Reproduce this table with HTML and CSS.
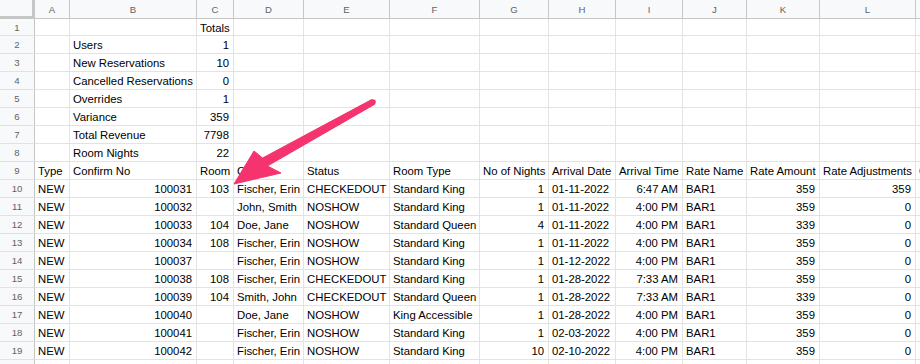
FILE: index.html
```html
<!DOCTYPE html>
<html>
<head>
<meta charset="utf-8">
<link rel="stylesheet" href="styles.css">
</head>
<body>
<div class="sheet">
  <div class="grid" id="grid">
    <div class="corner"></div>
    <div class="ch">A</div><div class="ch">B</div><div class="ch">C</div><div class="ch">D</div><div class="ch">E</div><div class="ch">F</div><div class="ch">G</div><div class="ch">H</div><div class="ch">I</div><div class="ch">J</div><div class="ch">K</div><div class="ch">L</div><div class="ch"></div>

    <div class="rh">1</div><div class="c"></div><div class="c"></div><div class="c">Totals</div><div class="c"></div><div class="c"></div><div class="c"></div><div class="c"></div><div class="c"></div><div class="c"></div><div class="c"></div><div class="c"></div><div class="c"></div><div class="c"></div>
    <div class="rh">2</div><div class="c"></div><div class="c">Users</div><div class="c n">1</div><div class="c"></div><div class="c"></div><div class="c"></div><div class="c"></div><div class="c"></div><div class="c"></div><div class="c"></div><div class="c"></div><div class="c"></div><div class="c"></div>
    <div class="rh">3</div><div class="c"></div><div class="c">New Reservations</div><div class="c n">10</div><div class="c"></div><div class="c"></div><div class="c"></div><div class="c"></div><div class="c"></div><div class="c"></div><div class="c"></div><div class="c"></div><div class="c"></div><div class="c"></div>
    <div class="rh">4</div><div class="c"></div><div class="c">Cancelled Reservations</div><div class="c n">0</div><div class="c"></div><div class="c"></div><div class="c"></div><div class="c"></div><div class="c"></div><div class="c"></div><div class="c"></div><div class="c"></div><div class="c"></div><div class="c"></div>
    <div class="rh">5</div><div class="c"></div><div class="c">Overrides</div><div class="c n">1</div><div class="c"></div><div class="c"></div><div class="c"></div><div class="c"></div><div class="c"></div><div class="c"></div><div class="c"></div><div class="c"></div><div class="c"></div><div class="c"></div>
    <div class="rh">6</div><div class="c"></div><div class="c">Variance</div><div class="c n">359</div><div class="c"></div><div class="c"></div><div class="c"></div><div class="c"></div><div class="c"></div><div class="c"></div><div class="c"></div><div class="c"></div><div class="c"></div><div class="c"></div>
    <div class="rh">7</div><div class="c"></div><div class="c">Total Revenue</div><div class="c n">7798</div><div class="c"></div><div class="c"></div><div class="c"></div><div class="c"></div><div class="c"></div><div class="c"></div><div class="c"></div><div class="c"></div><div class="c"></div><div class="c"></div>
    <div class="rh">8</div><div class="c"></div><div class="c">Room Nights</div><div class="c n">22</div><div class="c"></div><div class="c"></div><div class="c"></div><div class="c"></div><div class="c"></div><div class="c"></div><div class="c"></div><div class="c"></div><div class="c"></div><div class="c"></div>
    <div class="rh">9</div><div class="c">Type</div><div class="c">Confirm No</div><div class="c">Room</div><div class="c">Guest</div><div class="c">Status</div><div class="c">Room Type</div><div class="c">No of Nights</div><div class="c">Arrival Date</div><div class="c">Arrival Time</div><div class="c">Rate Name</div><div class="c">Rate Amount</div><div class="c">Rate Adjustments</div><div class="c">Comments</div>

    <div class="rh">10</div><div class="c">NEW</div><div class="c n">100031</div><div class="c n">103</div><div class="c">Fischer, Erin</div><div class="c">CHECKEDOUT</div><div class="c">Standard King</div><div class="c n">1</div><div class="c">01-11-2022</div><div class="c n">6:47 AM</div><div class="c">BAR1</div><div class="c n">359</div><div class="c n">359</div><div class="c"></div>
    <div class="rh">11</div><div class="c">NEW</div><div class="c n">100032</div><div class="c n"></div><div class="c">John, Smith</div><div class="c">NOSHOW</div><div class="c">Standard King</div><div class="c n">1</div><div class="c">01-11-2022</div><div class="c n">4:00 PM</div><div class="c">BAR1</div><div class="c n">359</div><div class="c n">0</div><div class="c"></div>
    <div class="rh">12</div><div class="c">NEW</div><div class="c n">100033</div><div class="c n">104</div><div class="c">Doe, Jane</div><div class="c">NOSHOW</div><div class="c">Standard Queen</div><div class="c n">4</div><div class="c">01-11-2022</div><div class="c n">4:00 PM</div><div class="c">BAR1</div><div class="c n">339</div><div class="c n">0</div><div class="c"></div>
    <div class="rh">13</div><div class="c">NEW</div><div class="c n">100034</div><div class="c n">108</div><div class="c">Fischer, Erin</div><div class="c">NOSHOW</div><div class="c">Standard King</div><div class="c n">1</div><div class="c">01-11-2022</div><div class="c n">4:00 PM</div><div class="c">BAR1</div><div class="c n">359</div><div class="c n">0</div><div class="c"></div>
    <div class="rh">14</div><div class="c">NEW</div><div class="c n">100037</div><div class="c n"></div><div class="c">Fischer, Erin</div><div class="c">NOSHOW</div><div class="c">Standard King</div><div class="c n">1</div><div class="c">01-12-2022</div><div class="c n">4:00 PM</div><div class="c">BAR1</div><div class="c n">359</div><div class="c n">0</div><div class="c"></div>
    <div class="rh">15</div><div class="c">NEW</div><div class="c n">100038</div><div class="c n">108</div><div class="c">Fischer, Erin</div><div class="c">CHECKEDOUT</div><div class="c">Standard King</div><div class="c n">1</div><div class="c">01-28-2022</div><div class="c n">7:33 AM</div><div class="c">BAR1</div><div class="c n">359</div><div class="c n">0</div><div class="c"></div>
    <div class="rh">16</div><div class="c">NEW</div><div class="c n">100039</div><div class="c n">104</div><div class="c">Smith, John</div><div class="c">CHECKEDOUT</div><div class="c">Standard Queen</div><div class="c n">1</div><div class="c">01-28-2022</div><div class="c n">7:33 AM</div><div class="c">BAR1</div><div class="c n">339</div><div class="c n">0</div><div class="c"></div>
    <div class="rh">17</div><div class="c">NEW</div><div class="c n">100040</div><div class="c n"></div><div class="c">Doe, Jane</div><div class="c">NOSHOW</div><div class="c">King Accessible</div><div class="c n">1</div><div class="c">01-28-2022</div><div class="c n">4:00 PM</div><div class="c">BAR1</div><div class="c n">359</div><div class="c n">0</div><div class="c"></div>
    <div class="rh">18</div><div class="c">NEW</div><div class="c n">100041</div><div class="c n"></div><div class="c">Fischer, Erin</div><div class="c">NOSHOW</div><div class="c">Standard King</div><div class="c n">1</div><div class="c">02-03-2022</div><div class="c n">4:00 PM</div><div class="c">BAR1</div><div class="c n">359</div><div class="c n">0</div><div class="c"></div>
    <div class="rh">19</div><div class="c">NEW</div><div class="c n">100042</div><div class="c n"></div><div class="c">Fischer, Erin</div><div class="c">NOSHOW</div><div class="c">Standard King</div><div class="c n">10</div><div class="c">02-10-2022</div><div class="c n">4:00 PM</div><div class="c">BAR1</div><div class="c n">359</div><div class="c n">0</div><div class="c"></div>
    <div class="rh"></div><div class="c"></div><div class="c"></div><div class="c"></div><div class="c"></div><div class="c"></div><div class="c"></div><div class="c"></div><div class="c"></div><div class="c"></div><div class="c"></div><div class="c"></div><div class="c"></div><div class="c"></div>
  </div>
  <svg class="arrow" width="920" height="364" viewBox="0 0 920 364">
    <polygon points="234,184 254,151 262.6,158 371.6,99.6 374.4,104.4 267.4,166 281,173" fill="#f5336f" stroke="#f5336f" stroke-width="1" stroke-linejoin="round"/>
    <circle cx="373" cy="102" r="2.8" fill="#f5336f"/>
  </svg>
</div>
</body>
</html>
```
FILE: styles.css
```css
html, body {
  margin: 0;
  padding: 0;
  background: #ffffff;
  overflow: hidden;
}
.sheet {
  position: relative;
  width: 920px;
  height: 364px;
  overflow: hidden;
  font-family: "Liberation Sans", Arial, sans-serif;
}
.grid {
  display: grid;
  grid-template-columns: 35px 35px 127px 37px 70px 86px 90px 69px 67px 67px 64px 73px 96px 100px;
  grid-template-rows: 19px 17px;
  grid-auto-rows: 18px;
  width: 1036px;
}
.corner {
  background: #f8f9fa;
  border-right: 3px solid #c4c7c5;
  border-bottom: 3px solid #c4c7c5;
  box-sizing: border-box;
}
.ch {
  background: #f8f9fa;
  border-right: 1px solid #c4c7c5;
  border-bottom: 1px solid #c4c7c5;
  box-sizing: border-box;
  color: #5f6368;
  font-size: 9.6px;
  display: flex;
  align-items: center;
  justify-content: center;
  padding-top: 1px;
}
.rh {
  background: #f8f9fa;
  border-right: 1px solid #c4c7c5;
  border-bottom: 1px solid #e1e3e1;
  box-sizing: border-box;
  color: #5f6368;
  font-size: 9.6px;
  display: flex;
  align-items: center;
  justify-content: center;
}
.c {
  border-right: 1px solid #e2e3e3;
  border-bottom: 1px solid #e2e3e3;
  box-sizing: border-box;
  font-size: 11.35px;
  color: #000;
  padding: 1px 3px 0 3px;
  white-space: nowrap;
  overflow: visible;
  line-height: 16px;
}
.n {
  text-align: right;
  padding-right: 4px;
}
.arrow {
  position: absolute;
  left: 0;
  top: 0;
  pointer-events: none;
}
```
